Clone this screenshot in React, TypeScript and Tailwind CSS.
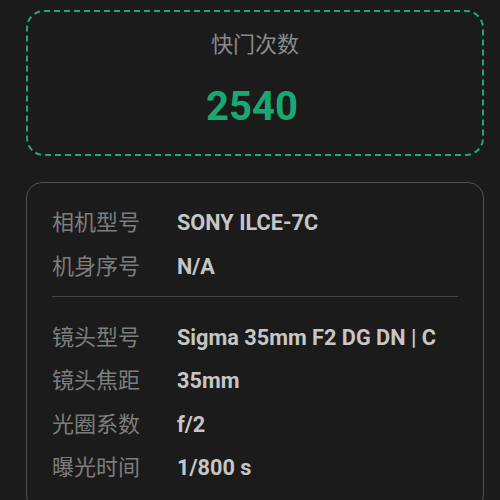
import React from "react";

const font = { fontFamily: 'Roboto, "Noto Sans CJK SC", sans-serif' };

function Row({ label, value, h }: { label: string; value: string; h: string }) {
  return (
    <div className={`flex items-center ${h}`}>
      <div className="w-[125px] shrink-0 text-[22px] leading-[30px] text-[#7d7d7d]">{label}</div>
      <div className="text-[21.7px] leading-[30px] font-bold text-[#c6c6c6]">{value}</div>
    </div>
  );
}

export default function App() {
  return (
    <div
      className="w-[500px] h-[500px] overflow-hidden bg-[#1b1b1b] pl-[26px] pr-[16px] pt-[10px]"
      style={font}
    >
      <div className="flex flex-col items-center rounded-[18px] border-[2.5px] border-dashed border-[#1fa874] pt-[18px] pb-[22px]">
        <div className="text-[22px] leading-[30px] text-[#8a8a8a]">快门次数</div>
        <div className="mt-[22px] mr-[6px] text-[40px] leading-[50px] font-bold text-[#1aa872]">2540</div>
      </div>
      <div className="mt-[26px] rounded-[16px] border border-[#505050] px-[25px] pt-[18px] pb-[20px]">
        <Row label="相机型号" value="SONY ILCE-7C" h="h-[44px]" />
        <Row label="机身序号" value="N/A" h="h-[44px]" />
        <div className="mt-[7px] mb-[19px] h-px bg-[#454545]" />
        <Row label="镜头型号" value="Sigma 35mm F2 DG DN | C" h="h-[43.5px]" />
        <Row label="镜头焦距" value="35mm" h="h-[43.5px]" />
        <Row label="光圈系数" value="f/2" h="h-[43.5px]" />
        <Row label="曝光时间" value="1/800 s" h="h-[43.5px]" />
      </div>
    </div>
  );
}
